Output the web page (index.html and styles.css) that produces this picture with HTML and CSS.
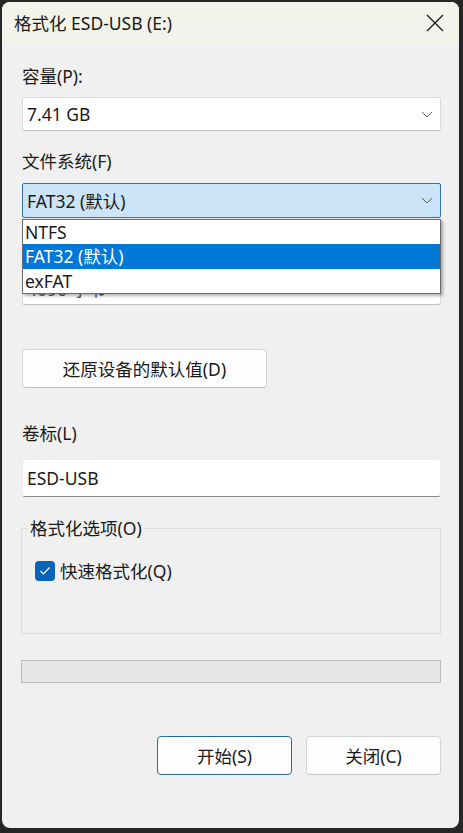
FILE: index.html
```html
<!DOCTYPE html>
<html lang="zh-CN">
<head>
  <meta charset="UTF-8">
  <title>格式化 ESD-USB (E:)</title>
  <link rel="stylesheet" href="styles.css">
</head>
<body>

  <div class="window">
    <div class="titlebar">
      <span class="title">格式化 ESD-USB (E:)</span>
      <svg class="close" width="18" height="18" viewBox="0 0 18 18">
        <path d="M1 1 L17 17 M17 1 L1 17" stroke="#1a1a1a" stroke-width="1.3" fill="none"/>
      </svg>
    </div>

    <div class="content">
      <div class="label first">容量(P):</div>
      <div class="combo">
        <span>7.41 GB</span>
        <svg class="chevron" width="12" height="7" viewBox="0 0 12 7">
          <path d="M1 1 L6 6 L11 1" stroke="#606060" stroke-width="1" fill="none"/>
        </svg>
      </div>

      <div class="label">文件系统(F)</div>
      <div class="combo-wrap">
        <div class="combo active">
          <span>FAT32 (默认)</span>
          <svg class="chevron" width="12" height="7" viewBox="0 0 12 7">
            <path d="M1 1 L6 6 L11 1" stroke="#606060" stroke-width="1" fill="none"/>
          </svg>
        </div>
        <ul class="dropdown">
          <li>NTFS</li>
          <li class="selected">FAT32 (默认)</li>
          <li>exFAT</li>
        </ul>
      </div>

      <!-- covered by the open dropdown -->
      <div class="label hidden">分配单元大小(A)</div>
      <div class="combo third">
        <span class="peek">4096 字节</span>
      </div>

      <button class="btn restore">还原设备的默认值(D)</button>

      <div class="label volume">卷标(L)</div>
      <div class="textbox">ESD-USB</div>

      <fieldset class="group">
        <legend>格式化选项(O)</legend>
        <div class="check-row">
          <span class="checkbox">
            <svg width="12" height="10" viewBox="0 0 12 10">
              <path d="M1.5 5 L4.5 8 L10.5 1.5" stroke="#fff" stroke-width="1.2" fill="none"/>
            </svg>
          </span>
          <span>快速格式化(Q)</span>
        </div>
      </fieldset>

      <div class="progress"></div>

      <div class="actions">
        <button class="btn primary">开始(S)</button>
        <button class="btn">关闭(C)</button>
      </div>
    </div>
  </div>

</body>
</html>
```

FILE: styles.css
```css
* {
  box-sizing: border-box;
}

html, body {
  margin: 0;
  padding: 0;
}

body {
  background: #262626;
  font-family: 'Segoe UI', 'Noto Sans', 'Noto Sans CJK SC', sans-serif;
  font-size: 17.5px;
  color: #1a1a1a;
  width: 463px;
  height: 833px;
  overflow: hidden;
  padding: 2px 4px 0 2px;
}

.window {
  height: 826px;
  background: #f0f0f0;
  border-radius: 8px;
  overflow: hidden;
}

.titlebar {
  height: 42px;
  background: #f2f3ea;
  display: flex;
  align-items: center;
  justify-content: space-between;
  padding: 0 15px 0 12px;
}

.title {
  font-size: 17.5px;
  line-height: 24px;
}

.close {
  display: block;
}

.content {
  padding: 0 18px 0 20px;
}

.label {
  line-height: 24px;
  margin-top: 18px;
}

.label.first {
  margin-top: 20px;
}

.label.hidden {
  visibility: hidden;
}

.combo {
  height: 34px;
  margin-top: 9px;
  background: #fff;
  border: 1px solid #dadada;
  border-bottom-color: #bdbdbd;
  border-radius: 3px;
  display: flex;
  align-items: center;
  justify-content: space-between;
  padding: 0 7px 0 4px;
}

.chevron {
  display: block;
}

.combo-wrap {
  position: relative;
  margin-top: 10px;
}

.combo.active {
  margin-top: 0;
  height: 35px;
  background: #cce4f7;
  border-color: #3373ad;
  border-radius: 2px;
}

.combo.third {
  margin-top: 11px;
  overflow: hidden;
}

.peek {
  color: #555;
}

.dropdown {
  position: absolute;
  top: 100%;
  left: 0;
  right: 0;
  margin: 1px 0 0;
  padding: 0;
  list-style: none;
  background: #fff;
  border: 1px solid #6b6b6b;
  box-shadow: 2px 2px 3px rgba(0, 0, 0, 0.3);
  z-index: 2;
}

.dropdown li {
  height: 24.3px;
  line-height: 24px;
  padding-left: 2px;
}

.dropdown li.selected {
  background: #0078d7;
  color: #fff;
}

.btn {
  font-family: inherit;
  font-size: 17.5px;
  color: #1a1a1a;
  background: #fdfdfd;
  border: 1px solid #d5d5d5;
  border-bottom-color: #c2c2c2;
  border-radius: 4px;
  height: 39px;
  padding: 0;
}

.restore {
  display: block;
  width: 245px;
  margin-top: 44px;
}

.label.volume {
  margin-top: 33px;
}

.textbox {
  height: 38px;
  margin-top: 14px;
  background: #fff;
  border: 1px solid #ececec;
  border-bottom-color: #8a8a8a;
  border-radius: 3px;
  display: flex;
  align-items: center;
  padding-left: 4px;
}

.group {
  margin: 19px 0 0 -1px;
  padding: 0 0 50px;
  border: 1px solid #dcdcdc;
  min-width: 0;
}

.group legend {
  line-height: 24px;
  padding: 0 2px;
  margin-left: 6px;
}

.check-row {
  display: flex;
  align-items: center;
  gap: 5px;
  line-height: 24px;
  margin: 19px 0 0 13px;
}

.checkbox {
  width: 20px;
  height: 20px;
  border-radius: 4px;
  background: #0863b9;
  display: flex;
  align-items: center;
  justify-content: center;
}

.progress {
  height: 23px;
  margin: 26px 0 0 -1px;
  background: #e6e6e6;
  border: 1px solid #bcbcbc;
}

.actions {
  display: flex;
  justify-content: flex-end;
  gap: 14px;
  margin-top: 53px;
}

.actions .btn {
  width: 135px;
}

.btn.primary {
  border-color: #2b6c96;
}
```
